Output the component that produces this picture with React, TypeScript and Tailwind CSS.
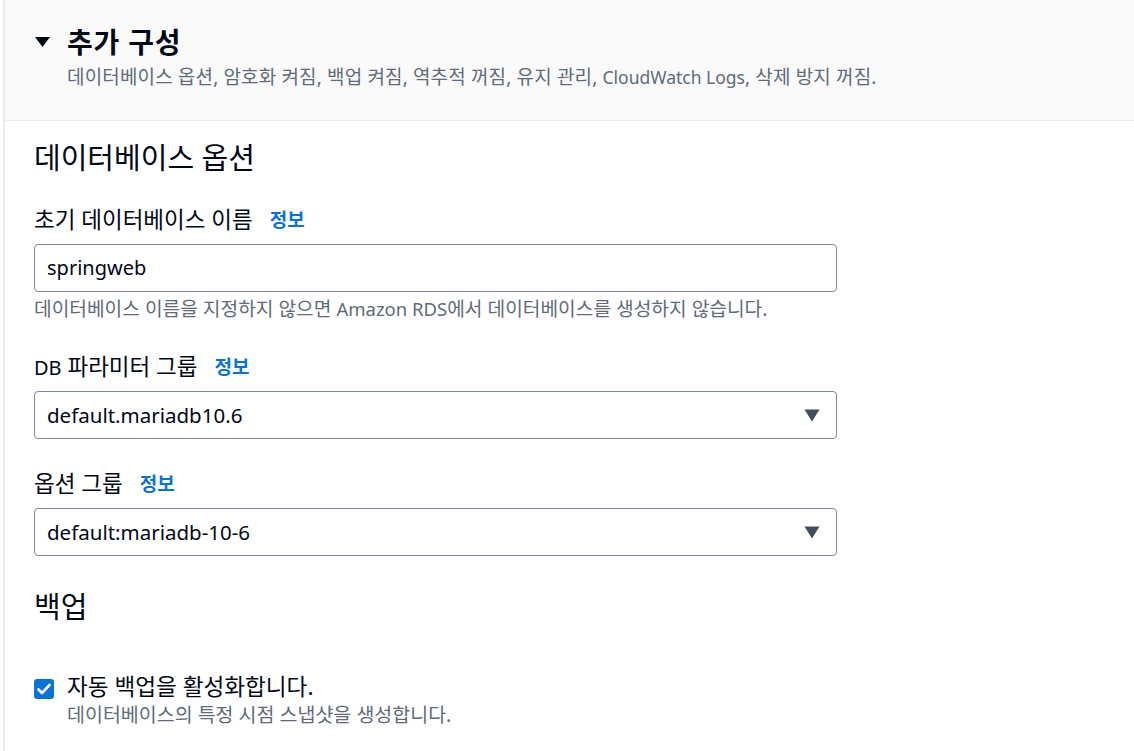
import React from 'react'

const font = { fontFamily: '"Noto Sans", "Noto Sans CJK KR", sans-serif' }

function Info() {
  return <span className="ml-[17px] text-[19px] font-bold text-[#0972d3]">정보</span>
}

function Caret() {
  return (
    <svg width="16" height="13" viewBox="0 0 16 13" className="shrink-0">
      <path d="M0.5 0.5H15.5L8 12.5Z" fill="#414d5c" />
    </svg>
  )
}

function Field({ label, children, help }: { label: React.ReactNode; children: React.ReactNode; help?: React.ReactNode }) {
  return (
    <div className="flex flex-col">
      <div className="flex items-center h-[30px] text-[22.5px] text-[#000716]">
        <span>{label}</span>
        <Info />
      </div>
      <div className="mt-[9px]">{children}</div>
      {help && <div className="mt-[4px] text-[19.2px] text-[#5f6b7a] leading-[26px]">{help}</div>}
    </div>
  )
}

function Select({ value }: { value: string }) {
  return (
    <div className="w-[803px] h-[48px] border border-[#7d8998] rounded-[4px] flex items-center justify-between pl-[12px] pr-[16px] text-[20.5px] text-[#000716]">
      <span>{value}</span>
      <Caret />
    </div>
  )
}

export default function App() {
  return (
    <div className="w-[1134px] h-[751px] overflow-hidden bg-white pl-[3px]" style={font}>
      <div className="h-full border-l-2 border-[#e9ebed]">
        {/* Header */}
        <div className="h-[121px] bg-[#fafafa] border-b border-[#e9ebed] pl-[29px] pt-[24px]">
          <div className="flex items-center h-[36px]">
            <svg width="15" height="10" viewBox="0 0 15 10" className="ml-[1px] mr-[17px]">
              <path d="M0 0H15L7.5 10Z" fill="#000716" />
            </svg>
            <span className="text-[28px] font-bold text-[#000716] tracking-[0.8px] leading-[36px]">추가 구성</span>
          </div>
          <div className="pl-[33px] mt-[4px] text-[19px] tracking-[0.15px] text-[#5f6b7a] leading-[26px]">
            데이터베이스 옵션, 암호화 켜짐, 백업 켜짐, 역추적 꺼짐, 유지 관리,{' '}
            <span className="text-[17.5px] tracking-normal">CloudWatch Logs</span>, 삭제 방지 꺼짐.
          </div>
        </div>

        {/* Body */}
        <div className="pl-[29px] pt-[19px]">
          <div className="text-[29px] text-[#000716] leading-[36px]">데이터베이스 옵션</div>

          <div className="mt-[29px] flex flex-col gap-[30px]">
            <Field
              label="초기 데이터베이스 이름"
              help={
                <>
                  데이터베이스 이름을 지정하지 않으면 <span className="text-[18.5px]">Amazon RDS</span>에서 데이터베이스를 생성하지 않습니다.
                </>
              }
            >
              <div className="w-[803px] h-[48px] border border-[#7d8998] rounded-[4px] flex items-center pl-[12px] text-[20px] text-[#000716]">
                springweb
              </div>
            </Field>
            <Field label={<><span className="text-[20px]">DB</span> 파라미터 그룹</>}>
              <Select value="default.mariadb10.6" />
            </Field>
            <Field label="옵션 그룹">
              <Select value="default:mariadb-10-6" />
            </Field>
          </div>

          <div className="mt-[33px] text-[29px] text-[#000716] leading-[36px]">백업</div>

          <div className="mt-[48px] flex items-start">
            <div className="w-[20px] h-[20px] rounded-[3px] bg-[#0972d3] flex items-center justify-center mt-[6px]">
              <svg width="14" height="12" viewBox="0 0 14 12">
                <path d="M1.5 6.5L5 10L12.5 2" stroke="white" strokeWidth="2.6" fill="none" strokeLinecap="round" strokeLinejoin="round" />
              </svg>
            </div>
            <div className="ml-[13px] flex flex-col">
              <span className="text-[22.6px] text-[#000716] leading-[28px]">자동 백업을 활성화합니다.</span>
              <span className="mt-[1px] text-[19.5px] text-[#5f6b7a] leading-[26px]">데이터베이스의 특정 시점 스냅샷을 생성합니다.</span>
            </div>
          </div>
        </div>
      </div>
    </div>
  )
}
